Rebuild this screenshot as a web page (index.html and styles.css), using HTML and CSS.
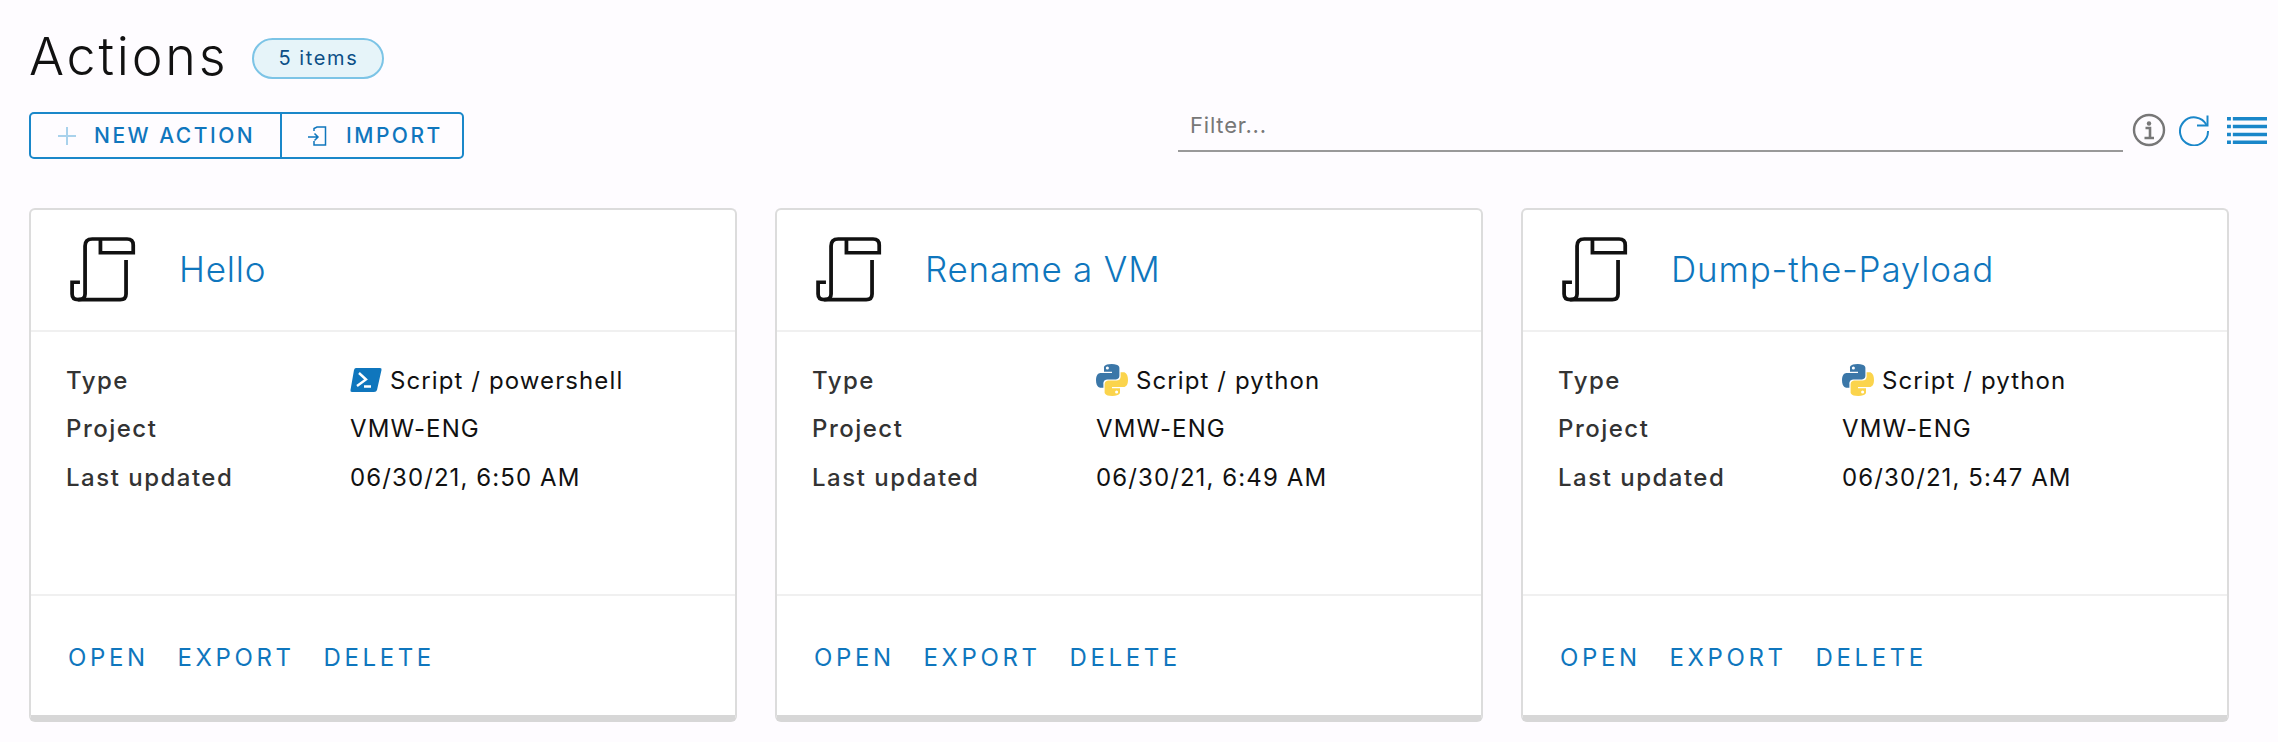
FILE: index.html
```html
<!DOCTYPE html>
<html lang="en">
<head>
<meta charset="utf-8">
<title>Actions</title>
<link rel="stylesheet" href="styles.css">
</head>
<body>
<svg class="defs" width="0" height="0" aria-hidden="true">
  <symbol id="scroll" viewBox="145 110 205 200" preserveAspectRatio="none">
    <path d="M180 248H157V283Q157 300 175 300Q195 300 195 283V140Q195 119 216 119H318Q336 119 336 137V160H240V122" fill="none" stroke="currentColor" stroke-width="11"/>
    <path d="M315 182V283Q315 300 298 300H175" fill="none" stroke="currentColor" stroke-width="11"/>
  </symbol>
  <symbol id="python" viewBox="3 3 104 104">
    <path fill="#3b77a8" d="M54 3C27 3 29 15 29 15V28H55V32H19C19 32 3 30 3 55S17 80 17 80H27V67S26 53 40 53H66S79 53 79 41V16S81 3 54 3ZM40 11A5 5 0 1 1 40 21A5 5 0 1 1 40 11Z"/>
    <path fill="#fbd44c" d="M56 107C83 107 81 95 81 95V82H55V78H91C91 78 107 80 107 55S93 30 93 30H83V43S84 57 70 57H44S31 57 31 69V94S29 107 56 107ZM70 89A5 5 0 1 1 70 99A5 5 0 1 1 70 89Z"/>
  </symbol>
  <symbol id="powershell" viewBox="0 0 32 26">
    <path fill="#0f76bd" d="M6 1H30Q32 1 31.500 3L27 23Q26.500 25 24 25H2Q0 25 .5 23L4 3Q4.500 1 6 1Z"/>
    <path fill="none" stroke="#fff" stroke-width="2.400" d="M9 6L16 12.500L7 19M14 19.500H21"/>
  </symbol>
</svg>
<main class="page">
  <header class="title-row">
    <h1 class="title">Actions</h1>
    <span class="badge">5 items</span>
  </header>
  <div class="toolbar">
    <div class="btn-group">
      <button class="btn btn-new" type="button">
        <svg class="ico-plus" viewBox="0 0 18 18"><path d="M9 0V18M0 9H18" fill="none" stroke="#a9d2ec" stroke-width="2"/></svg>
        NEW ACTION
      </button>
      <button class="btn btn-import" type="button">
        <svg class="ico-import" viewBox="0 0 20 20"><path d="M7 5V2.500L10 1H18.500V19H7V15M1 11H11M7.500 7.500L11 11L7.500 14.500" fill="none" stroke="#0f76bd" stroke-width="1.500"/></svg>
        IMPORT
      </button>
    </div>
    <input class="filter" type="text" placeholder="Filter...">
    <div class="tools">
      <svg class="ico-info" viewBox="0 0 34 34"><circle cx="17" cy="17" r="15" fill="none" stroke="#777" stroke-width="2.400"/><circle cx="17" cy="10.500" r="2.200" fill="#777"/><path d="M13.500 15H18V24M12.500 25H22" fill="none" stroke="#777" stroke-width="2.600"/></svg>
      <svg class="ico-refresh" viewBox="0 0 32 32"><path d="M28.500 11A14 14 0 1 0 30 17" fill="none" stroke="#1a87c9" stroke-width="2"/><path d="M19 11.500H29.500V1.500" fill="none" stroke="#1a87c9" stroke-width="2"/></svg>
      <svg class="ico-list" viewBox="0 0 41 28"><path d="M0 2.500H4M6 2.500H41M0 10.500H4M6 10.500H41M0 18.500H4M6 18.500H41M0 26.500H4M6 26.500H41" fill="none" stroke="#1a87c9" stroke-width="3.600"/></svg>
    </div>
  </div>
  <section class="cards">
    <article class="card">
      <div class="card-head">
        <svg class="ico-scroll"><use href="#scroll"/></svg>
        <a class="card-title">Hello</a>
      </div>
      <dl class="card-body">
        <dt>Type</dt>
        <dd><svg class="ico-type"><use href="#powershell"/></svg>Script / powershell</dd>
        <dt>Project</dt>
        <dd>VMW-ENG</dd>
        <dt>Last updated</dt>
        <dd>06/30/21, 6:50 AM</dd>
      </dl>
      <div class="card-foot"><a>OPEN</a><a>EXPORT</a><a>DELETE</a></div>
    </article>
    <article class="card">
      <div class="card-head">
        <svg class="ico-scroll"><use href="#scroll"/></svg>
        <a class="card-title">Rename a VM</a>
      </div>
      <dl class="card-body">
        <dt>Type</dt>
        <dd><svg class="ico-type"><use href="#python"/></svg>Script / python</dd>
        <dt>Project</dt>
        <dd>VMW-ENG</dd>
        <dt>Last updated</dt>
        <dd>06/30/21, 6:49 AM</dd>
      </dl>
      <div class="card-foot"><a>OPEN</a><a>EXPORT</a><a>DELETE</a></div>
    </article>
    <article class="card">
      <div class="card-head">
        <svg class="ico-scroll"><use href="#scroll"/></svg>
        <a class="card-title">Dump-the-Payload</a>
      </div>
      <dl class="card-body">
        <dt>Type</dt>
        <dd><svg class="ico-type"><use href="#python"/></svg>Script / python</dd>
        <dt>Project</dt>
        <dd>VMW-ENG</dd>
        <dt>Last updated</dt>
        <dd>06/30/21, 5:47 AM</dd>
      </dl>
      <div class="card-foot"><a>OPEN</a><a>EXPORT</a><a>DELETE</a></div>
    </article>
  </section>
</main>
</body>
</html>
```
FILE: styles.css
```css
* { box-sizing: border-box; }
html, body { margin: 0; height: 100%; }
body {
  background: #fefcff;
  font-family: Inter, "Liberation Sans", sans-serif;
  color: #111;
  overflow: hidden;
}
.defs { position: absolute; }
.page { padding: 0 0 0 29px; }

.title-row {
  display: flex;
  align-items: center;
  height: 112px;
  padding: 2px 0 0;
}
.title {
  margin: 0;
  font-size: 52px;
  font-weight: 300;
  line-height: 58px;
  letter-spacing: 2.800px;
  color: #111;
}
.badge {
  margin: 3px 0 0 24px;
  width: 132px;
  height: 41px;
  border: 2px solid #7cc4e6;
  border-radius: 21px;
  background: #e6f4f9;
  color: #0c4f87;
  font-size: 20px;
  line-height: 37px;
  text-align: center;
  letter-spacing: 1.600px;
}

.toolbar {
  display: flex;
  align-items: flex-start;
  height: 96px;
}
.btn-group {
  display: flex;
  flex: none;
  height: 47px;
  border: 2px solid #1a87c9;
  border-radius: 5px;
}
.btn {
  display: flex;
  align-items: center;
  height: 100%;
  padding: 0;
  border: 0;
  background: none;
  color: #0f76bd;
  font-family: inherit;
  font-size: 21px;
  font-weight: 500;
  letter-spacing: 2.500px;
  white-space: nowrap;
}
.btn-new { width: 251px; padding-left: 27px; border-right: 2px solid #1a87c9; }
.btn-import { width: 180px; padding-left: 25px; }
.ico-plus { width: 18px; height: 18px; margin-right: 18px; flex: none; }
.ico-import { width: 20px; height: 20px; margin-right: 19px; flex: none; }

.filter {
  flex: none;
  margin-left: 714px;
  width: 945px;
  height: 40px;
  padding: 0 12px 12px;
  border: 0;
  border-bottom: 2px solid #999;
  background: none;
  font-family: inherit;
  font-size: 22px;
  letter-spacing: .8px;
  color: #777;
  outline: none;
}
.filter::placeholder { color: #777; opacity: 1; }

.tools { display: flex; align-items: flex-start; flex: none; margin-left: 9px; }
.ico-info { width: 34px; height: 34px; margin-top: 1px; }
.ico-refresh { width: 32px; height: 32px; margin: 2px 0 0 12px; }
.ico-list { width: 40px; height: 28px; margin: 4px 0 0 17px; }

.cards { display: flex; gap: 38px; }
.card {
  flex: none;
  width: 708px;
  height: 514px;
  display: flex;
  flex-direction: column;
  background: #fff;
  border: 2px solid #dcdcdc;
  border-bottom: 7px solid #d7d7d7;
  border-radius: 6px;
}
.card-head {
  display: flex;
  align-items: center;
  height: 122px;
  padding: 0 0 2px 37px;
  border-bottom: 2px solid #f0f0f0;
  flex: none;
}
.ico-scroll { width: 70px; height: 67px; color: #111; flex: none; }
.card-title {
  margin-left: 41px;
  font-size: 35px;
  font-weight: 300;
  letter-spacing: .8px;
  color: #0f76bd;
}
.card-body {
  display: grid;
  grid-template-columns: 284px 1fr;
  grid-auto-rows: 48.500px;
  align-content: start;
  align-items: center;
  margin: 0;
  height: 262px;
  padding: 24px 0 0 35px;
  flex: none;
  font-size: 24px;
  letter-spacing: 1.100px;
}
.card-body dt { font-weight: 500; color: #333; letter-spacing: 1.500px; }
.card-body dd { margin: 0; display: flex; align-items: center; color: #111; }
.ico-type { width: 32px; height: 32px; margin-right: 8px; flex: none; }
.card-foot {
  display: flex;
  align-items: center;
  gap: 29px;
  flex: 1;
  padding: 3px 0 0 37px;
  border-top: 2px solid #f0f0f0;
  color: #0f76bd;
  font-size: 24px;
  letter-spacing: 3.600px;
}
```
